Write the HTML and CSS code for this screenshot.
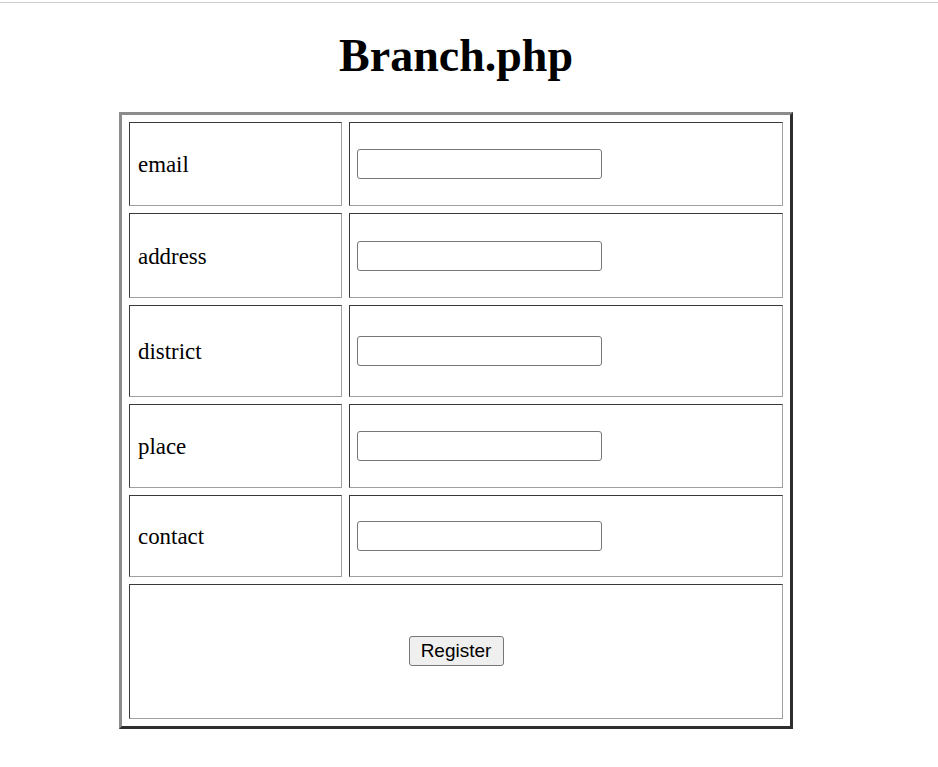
FILE: index.html
```html
<!DOCTYPE html>
<html>
<head>
<meta charset="utf-8">
<title>Branch.php</title>
<link rel="stylesheet" href="styles.css">
</head>
<body>
<div class="topline"></div>
<main class="page">
  <h1 class="title">Branch.php</h1>
  <form class="form">
    <table class="grid">
      <colgroup><col class="c1"><col class="c2"></colgroup>
      <tr class="r1"><td class="label">email</td><td class="field"><input class="box" type="text"></td></tr>
      <tr class="r2"><td class="label">address</td><td class="field"><input class="box" type="text"></td></tr>
      <tr class="r3"><td class="label">district</td><td class="field"><input class="box" type="text"></td></tr>
      <tr class="r4"><td class="label">place</td><td class="field"><input class="box" type="text"></td></tr>
      <tr class="r5"><td class="label">contact</td><td class="field"><input class="box" type="text"></td></tr>
      <tr class="r6"><td class="actions" colspan="2"><button class="btn" type="button">Register</button></td></tr>
    </table>
  </form>
</main>
</body>
</html>
```
FILE: styles.css
```css
html, body {
  margin: 0;
  padding: 0;
  background: #ffffff;
}
body {
  font-family: "Liberation Serif", "Times New Roman", serif;
  color: #000;
}
.topline {
  margin-top: 2px;
  border-top: 1px solid #cccccc;
}
.page {
  width: 912px;
}
.title {
  margin: 27px 0 0 0;
  text-align: center;
  font-family: "Liberation Serif", "Times New Roman", serif;
  font-weight: bold;
  font-size: 46px;
  line-height: 52px;
}
.form {
  margin: 30px 0 0 0;
}
.grid {
  margin: 0 auto;
  table-layout: fixed;
  width: 674px;
  border-collapse: separate;
  border-spacing: 7px;
  border-style: solid;
  border-width: 3px;
  border-color: #8c8c8c #2e2e2e #2e2e2e #8c8c8c;
}
.c1 { width: 213px; }
.c2 { width: 434px; }
.grid td {
  box-sizing: border-box;
  padding: 7px;
  border-style: solid;
  border-width: 1px;
  border-color: #3a3a3a #a0a0a0 #a0a0a0 #3a3a3a;
  vertical-align: middle;
}
.r1 td { height: 84px; }
.r2 td { height: 85px; }
.r3 td { height: 92px; }
.r4 td { height: 84px; }
.r5 td { height: 82px; }
.r6 td { height: 135px; }
.grid .label {
  font-size: 22.9px;
  padding: 9px 7px 7px 8px;
}
.box {
  display: block;
  box-sizing: border-box;
  width: 245px;
  height: 30px;
  margin: 0;
  padding: 2px 4px;
  border: 1px solid #767676;
  border-radius: 3px;
  background: #fff;
}
.actions {
  text-align: center;
}
.btn {
  box-sizing: border-box;
  width: 95px;
  height: 30px;
  margin: 0 0 2px 0;
  padding: 0;
  font-family: "Liberation Sans", Arial, sans-serif;
  font-size: 19px;
  color: #000;
  background: #efefef;
  border: 1px solid #767676;
  border-radius: 3px;
}
```
